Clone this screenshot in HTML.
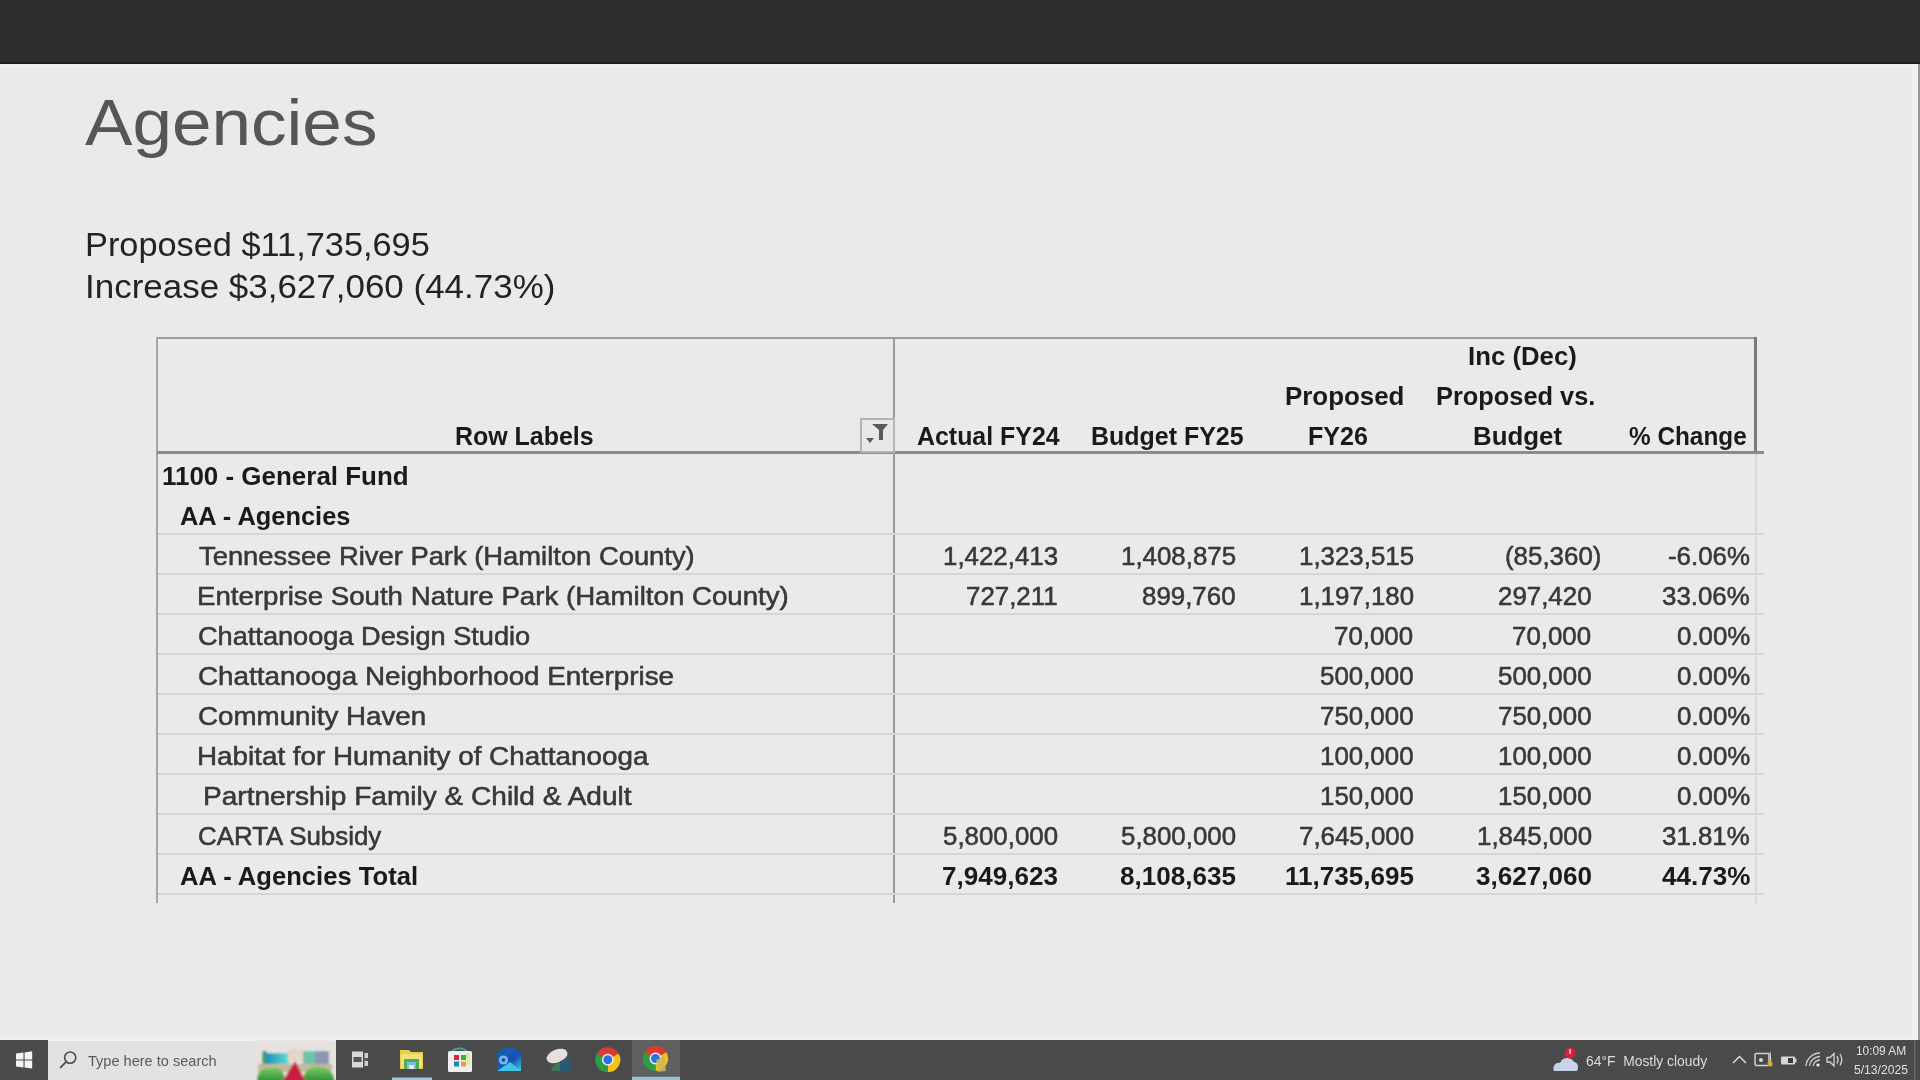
<!DOCTYPE html><html><head><meta charset="utf-8"><title>Agencies</title><style>

html,body{margin:0;padding:0;}
body{width:1920px;height:1080px;overflow:hidden;background:#eaeaea;position:relative;font-family:"Liberation Sans",sans-serif;}
.t{position:absolute;white-space:nowrap;line-height:1;transform-origin:0 0;}
.abs{position:absolute;}
.rg{-webkit-text-stroke:0.55px currentColor;}

</style></head><body>
<div id="slide" style="position:absolute;left:0;top:0;width:1920px;height:1080px;filter:blur(0.4px)">
<div class="abs" style="left:0;top:0;width:1920px;height:64px;background:#2d2d2d"></div><div class="abs" style="left:0;top:62px;width:1920px;height:2px;background:#1f1f1f"></div><div class="abs" style="left:0;top:65px;width:1920px;height:3px;background:#efefef"></div><div class="abs" style="left:1912px;top:64px;width:6px;height:976px;background:#f1f1f1"></div><div class="abs" style="left:1918px;top:64px;width:2px;height:976px;background:#9a9a9a"></div>
<div class="abs" style="left:157px;top:337px;width:1599px;height:2px;background:#9c9c9c"></div>
<div class="abs" style="left:156px;top:337px;width:2px;height:566px;background:#a6a6a6"></div>
<div class="abs" style="left:1754px;top:337px;width:3px;height:116px;background:#7a7a7a"></div>
<div class="abs" style="left:1755px;top:453px;width:2px;height:451px;background:#dadada"></div>
<div class="abs" style="left:157px;top:451px;width:1607px;height:3px;background:#8c8c8c"></div>
<div class="abs" style="left:893px;top:338px;width:2px;height:565px;background:#9a9a9a"></div>
<div class="abs" style="left:158px;top:533px;width:1606px;height:2px;background:#d6d6d6"></div>
<div class="abs" style="left:158px;top:573px;width:1606px;height:2px;background:#d6d6d6"></div>
<div class="abs" style="left:158px;top:613px;width:1606px;height:2px;background:#d6d6d6"></div>
<div class="abs" style="left:158px;top:653px;width:1606px;height:2px;background:#d6d6d6"></div>
<div class="abs" style="left:158px;top:693px;width:1606px;height:2px;background:#d6d6d6"></div>
<div class="abs" style="left:158px;top:733px;width:1606px;height:2px;background:#d6d6d6"></div>
<div class="abs" style="left:158px;top:773px;width:1606px;height:2px;background:#d6d6d6"></div>
<div class="abs" style="left:158px;top:813px;width:1606px;height:2px;background:#d6d6d6"></div>
<div class="abs" style="left:158px;top:853px;width:1606px;height:2px;background:#d6d6d6"></div>
<div class="abs" style="left:158px;top:893px;width:1606px;height:2px;background:#d6d6d6"></div>
<div class="abs" style="left:860px;top:418px;width:31px;height:31px;border:2px solid #b4b4b4;background:#e6e8ea"></div>
<svg class="abs" style="left:862px;top:420px" width="31" height="31" viewBox="0 0 31 31"><path d="M10 4 L26 4 L21 10 L21 20 L17 20 L17 10 Z" fill="#5a5a5a"/><path d="M4 18 L12 18 L8 23 Z" fill="#5a5a5a"/></svg>
<div class="t" id="title" style="left:85.00px;top:91.01px;font-size:64px;color:#565656;transform:scaleX(1.1107)">Agencies<span class="bl" style="display:inline-block;width:0;height:0"></span></div>
<div class="t" id="sub1" style="left:84.75px;top:227.01px;font-size:34px;color:#232323;transform:scaleX(1.0095)">Proposed $11,735,695<span class="bl" style="display:inline-block;width:0;height:0"></span></div>
<div class="t" id="sub2" style="left:84.57px;top:269.32px;font-size:34px;color:#232323;transform:scaleX(1.0283)">Increase $3,627,060 (44.73%)<span class="bl" style="display:inline-block;width:0;height:0"></span></div>
<div class="t" id="h_rl" style="left:454.95px;top:423.00px;font-size:26px;font-weight:bold;color:#1a1a1a;transform:scaleX(0.9596)">Row Labels<span class="bl" style="display:inline-block;width:0;height:0"></span></div>
<div class="t" id="h_a24" style="left:917.49px;top:423.00px;font-size:26px;font-weight:bold;color:#1a1a1a;transform:scaleX(0.9581)">Actual FY24<span class="bl" style="display:inline-block;width:0;height:0"></span></div>
<div class="t" id="h_b25" style="left:1091.29px;top:423.00px;font-size:26px;font-weight:bold;color:#1a1a1a;transform:scaleX(0.9601)">Budget FY25<span class="bl" style="display:inline-block;width:0;height:0"></span></div>
<div class="t" id="h_p26a" style="left:1284.65px;top:383.00px;font-size:26px;font-weight:bold;color:#1a1a1a;transform:scaleX(0.9960)">Proposed<span class="bl" style="display:inline-block;width:0;height:0"></span></div>
<div class="t" id="h_p26b" style="left:1308.36px;top:423.00px;font-size:26px;font-weight:bold;color:#1a1a1a;transform:scaleX(0.9644)">FY26<span class="bl" style="display:inline-block;width:0;height:0"></span></div>
<div class="t" id="h_inc1" style="left:1468.12px;top:343.00px;font-size:26px;font-weight:bold;color:#1a1a1a;transform:scaleX(0.9910)">Inc (Dec)<span class="bl" style="display:inline-block;width:0;height:0"></span></div>
<div class="t" id="h_inc2" style="left:1436.37px;top:383.00px;font-size:26px;font-weight:bold;color:#1a1a1a;transform:scaleX(0.9759)">Proposed vs.<span class="bl" style="display:inline-block;width:0;height:0"></span></div>
<div class="t" id="h_inc3" style="left:1472.64px;top:423.00px;font-size:26px;font-weight:bold;color:#1a1a1a;transform:scaleX(0.9940)">Budget<span class="bl" style="display:inline-block;width:0;height:0"></span></div>
<div class="t" id="h_pct" style="left:1628.79px;top:423.00px;font-size:26px;font-weight:bold;color:#1a1a1a;transform:scaleX(0.9364)">% Change<span class="bl" style="display:inline-block;width:0;height:0"></span></div>
<div class="t" id="r1" style="left:161.89px;top:463.00px;font-size:26px;font-weight:bold;color:#1a1a1a;transform:scaleX(0.9982)">1100 - General Fund<span class="bl" style="display:inline-block;width:0;height:0"></span></div>
<div class="t" id="r2" style="left:179.91px;top:503.00px;font-size:26px;font-weight:bold;color:#1a1a1a;transform:scaleX(0.9778)">AA - Agencies<span class="bl" style="display:inline-block;width:0;height:0"></span></div>
<div class="t rg" id="lab0" style="left:199.27px;top:543.00px;font-size:26px;color:#383838;transform:scaleX(1.0523)">Tennessee River Park (Hamilton County)<span class="bl" style="display:inline-block;width:0;height:0"></span></div>
<div class="t rg" id="lab1" style="left:197.27px;top:583.00px;font-size:26px;color:#383838;transform:scaleX(1.0637)">Enterprise South Nature Park (Hamilton County)<span class="bl" style="display:inline-block;width:0;height:0"></span></div>
<div class="t rg" id="lab2" style="left:197.84px;top:623.00px;font-size:26px;color:#383838;transform:scaleX(1.0446)">Chattanooga Design Studio<span class="bl" style="display:inline-block;width:0;height:0"></span></div>
<div class="t rg" id="lab3" style="left:197.81px;top:663.00px;font-size:26px;color:#383838;transform:scaleX(1.0692)">Chattanooga Neighborhood Enterprise<span class="bl" style="display:inline-block;width:0;height:0"></span></div>
<div class="t rg" id="lab4" style="left:197.81px;top:703.00px;font-size:26px;color:#383838;transform:scaleX(1.0668)">Community Haven<span class="bl" style="display:inline-block;width:0;height:0"></span></div>
<div class="t rg" id="lab5" style="left:196.62px;top:743.00px;font-size:26px;color:#383838;transform:scaleX(1.0695)">Habitat for Humanity of Chattanooga<span class="bl" style="display:inline-block;width:0;height:0"></span></div>
<div class="t rg" id="lab6" style="left:202.60px;top:783.00px;font-size:26px;color:#383838;transform:scaleX(1.0785)">Partnership Family &amp; Child &amp; Adult<span class="bl" style="display:inline-block;width:0;height:0"></span></div>
<div class="t rg" id="lab7" style="left:197.89px;top:823.00px;font-size:26px;color:#383838;transform:scaleX(0.9960)">CARTA Subsidy<span class="bl" style="display:inline-block;width:0;height:0"></span></div>
<div class="t" id="rtot" style="left:180.14px;top:863.00px;font-size:26px;font-weight:bold;color:#1a1a1a;transform:scaleX(0.9846)">AA - Agencies Total<span class="bl" style="display:inline-block;width:0;height:0"></span></div>
<div class="t rg" id="n0_0" style="left:942.63px;top:543.00px;font-size:26px;color:#383838;transform:scaleX(0.9953)">1,422,413<span class="bl" style="display:inline-block;width:0;height:0"></span></div>
<div class="t rg" id="n0_1" style="left:1120.63px;top:543.00px;font-size:26px;color:#383838;transform:scaleX(0.9953)">1,408,875<span class="bl" style="display:inline-block;width:0;height:0"></span></div>
<div class="t rg" id="n0_2" style="left:1298.63px;top:543.00px;font-size:26px;color:#383838;transform:scaleX(0.9953)">1,323,515<span class="bl" style="display:inline-block;width:0;height:0"></span></div>
<div class="t rg" id="n0_3" style="left:1504.78px;top:543.00px;font-size:26px;color:#383838;transform:scaleX(0.9953)">(85,360)<span class="bl" style="display:inline-block;width:0;height:0"></span></div>
<div class="t rg" id="n0_4" style="left:1668.23px;top:543.00px;font-size:26px;color:#383838;transform:scaleX(0.9953)">-6.06%<span class="bl" style="display:inline-block;width:0;height:0"></span></div>
<div class="t rg" id="n1_0" style="left:966.43px;top:583.00px;font-size:26px;color:#383838;transform:scaleX(0.9953)">727,211<span class="bl" style="display:inline-block;width:0;height:0"></span></div>
<div class="t rg" id="n1_1" style="left:1142.36px;top:583.00px;font-size:26px;color:#383838;transform:scaleX(0.9953)">899,760<span class="bl" style="display:inline-block;width:0;height:0"></span></div>
<div class="t rg" id="n1_2" style="left:1298.63px;top:583.00px;font-size:26px;color:#383838;transform:scaleX(0.9953)">1,197,180<span class="bl" style="display:inline-block;width:0;height:0"></span></div>
<div class="t rg" id="n1_3" style="left:1498.36px;top:583.00px;font-size:26px;color:#383838;transform:scaleX(0.9953)">297,420<span class="bl" style="display:inline-block;width:0;height:0"></span></div>
<div class="t rg" id="n1_4" style="left:1662.18px;top:583.00px;font-size:26px;color:#383838;transform:scaleX(0.9953)">33.06%<span class="bl" style="display:inline-block;width:0;height:0"></span></div>
<div class="t rg" id="n2_2" style="left:1334.34px;top:623.00px;font-size:26px;color:#383838;transform:scaleX(0.9953)">70,000<span class="bl" style="display:inline-block;width:0;height:0"></span></div>
<div class="t rg" id="n2_3" style="left:1512.34px;top:623.00px;font-size:26px;color:#383838;transform:scaleX(0.9953)">70,000<span class="bl" style="display:inline-block;width:0;height:0"></span></div>
<div class="t rg" id="n2_4" style="left:1677.10px;top:623.00px;font-size:26px;color:#383838;transform:scaleX(0.9953)">0.00%<span class="bl" style="display:inline-block;width:0;height:0"></span></div>
<div class="t rg" id="n3_2" style="left:1320.36px;top:663.00px;font-size:26px;color:#383838;transform:scaleX(0.9953)">500,000<span class="bl" style="display:inline-block;width:0;height:0"></span></div>
<div class="t rg" id="n3_3" style="left:1498.36px;top:663.00px;font-size:26px;color:#383838;transform:scaleX(0.9953)">500,000<span class="bl" style="display:inline-block;width:0;height:0"></span></div>
<div class="t rg" id="n3_4" style="left:1677.10px;top:663.00px;font-size:26px;color:#383838;transform:scaleX(0.9953)">0.00%<span class="bl" style="display:inline-block;width:0;height:0"></span></div>
<div class="t rg" id="n4_2" style="left:1320.36px;top:703.00px;font-size:26px;color:#383838;transform:scaleX(0.9953)">750,000<span class="bl" style="display:inline-block;width:0;height:0"></span></div>
<div class="t rg" id="n4_3" style="left:1498.36px;top:703.00px;font-size:26px;color:#383838;transform:scaleX(0.9953)">750,000<span class="bl" style="display:inline-block;width:0;height:0"></span></div>
<div class="t rg" id="n4_4" style="left:1677.10px;top:703.00px;font-size:26px;color:#383838;transform:scaleX(0.9953)">0.00%<span class="bl" style="display:inline-block;width:0;height:0"></span></div>
<div class="t rg" id="n5_2" style="left:1320.36px;top:743.00px;font-size:26px;color:#383838;transform:scaleX(0.9953)">100,000<span class="bl" style="display:inline-block;width:0;height:0"></span></div>
<div class="t rg" id="n5_3" style="left:1498.36px;top:743.00px;font-size:26px;color:#383838;transform:scaleX(0.9953)">100,000<span class="bl" style="display:inline-block;width:0;height:0"></span></div>
<div class="t rg" id="n5_4" style="left:1677.10px;top:743.00px;font-size:26px;color:#383838;transform:scaleX(0.9953)">0.00%<span class="bl" style="display:inline-block;width:0;height:0"></span></div>
<div class="t rg" id="n6_2" style="left:1320.36px;top:783.00px;font-size:26px;color:#383838;transform:scaleX(0.9953)">150,000<span class="bl" style="display:inline-block;width:0;height:0"></span></div>
<div class="t rg" id="n6_3" style="left:1498.36px;top:783.00px;font-size:26px;color:#383838;transform:scaleX(0.9953)">150,000<span class="bl" style="display:inline-block;width:0;height:0"></span></div>
<div class="t rg" id="n6_4" style="left:1677.10px;top:783.00px;font-size:26px;color:#383838;transform:scaleX(0.9953)">0.00%<span class="bl" style="display:inline-block;width:0;height:0"></span></div>
<div class="t rg" id="n7_0" style="left:942.63px;top:823.00px;font-size:26px;color:#383838;transform:scaleX(0.9953)">5,800,000<span class="bl" style="display:inline-block;width:0;height:0"></span></div>
<div class="t rg" id="n7_1" style="left:1120.63px;top:823.00px;font-size:26px;color:#383838;transform:scaleX(0.9953)">5,800,000<span class="bl" style="display:inline-block;width:0;height:0"></span></div>
<div class="t rg" id="n7_2" style="left:1298.63px;top:823.00px;font-size:26px;color:#383838;transform:scaleX(0.9953)">7,645,000<span class="bl" style="display:inline-block;width:0;height:0"></span></div>
<div class="t rg" id="n7_3" style="left:1476.63px;top:823.00px;font-size:26px;color:#383838;transform:scaleX(0.9953)">1,845,000<span class="bl" style="display:inline-block;width:0;height:0"></span></div>
<div class="t rg" id="n7_4" style="left:1662.18px;top:823.00px;font-size:26px;color:#383838;transform:scaleX(0.9953)">31.81%<span class="bl" style="display:inline-block;width:0;height:0"></span></div>
<div class="t" id="n8_0" style="left:941.83px;top:863.00px;font-size:26px;font-weight:bold;color:#1a1a1a;transform:scaleX(1.0022)">7,949,623<span class="bl" style="display:inline-block;width:0;height:0"></span></div>
<div class="t" id="n8_1" style="left:1119.79px;top:863.00px;font-size:26px;font-weight:bold;color:#1a1a1a;transform:scaleX(1.0022)">8,108,635<span class="bl" style="display:inline-block;width:0;height:0"></span></div>
<div class="t" id="n8_2" style="left:1284.80px;top:863.00px;font-size:26px;font-weight:bold;color:#1a1a1a;transform:scaleX(1.0022)">11,735,695<span class="bl" style="display:inline-block;width:0;height:0"></span></div>
<div class="t" id="n8_3" style="left:1475.81px;top:863.00px;font-size:26px;font-weight:bold;color:#1a1a1a;transform:scaleX(1.0022)">3,627,060<span class="bl" style="display:inline-block;width:0;height:0"></span></div>
<div class="t" id="n8_4" style="left:1661.53px;top:863.00px;font-size:26px;font-weight:bold;color:#1a1a1a;transform:scaleX(1.0022)">44.73%<span class="bl" style="display:inline-block;width:0;height:0"></span></div>
</div>
<div class="abs" style="left:0;top:1036px;width:1912px;height:4px;background:#eeeeee"></div>
<div class="abs" style="left:0;top:1040px;width:1920px;height:40px;background:#4a4a4a"></div>
<div class="abs" style="left:48px;top:1040px;width:288px;height:40px;background:#e2e2e2;box-shadow:inset 0 1px 0 #f2f2f2"></div>
<div class="t" style="left:88px;top:1053px;font-size:15px;color:#5a5a5a;transform:scaleX(0.97)">Type here to search</div>
<svg class="abs" style="left:0;top:1040px" width="1920" height="40" viewBox="0 1040 1920 40"><g fill="#f4f4f4"><path d="M16 1053.6 L23.5 1052.6 L23.5 1059.4 L16 1059.4 Z"/><path d="M24.6 1052.4 L32.2 1051.3 L32.2 1059.4 L24.6 1059.4 Z"/><path d="M16 1060.5 L23.5 1060.5 L23.5 1067.4 L16 1066.4 Z"/><path d="M24.6 1060.5 L32.2 1060.5 L32.2 1068.6 L24.6 1067.6 Z"/></g><circle cx="70.2" cy="1057.6" r="5.6" fill="none" stroke="#4e4e4e" stroke-width="1.6"/><path d="M66.2 1061.8 L60.6 1067.4" stroke="#4e4e4e" stroke-width="1.8" stroke-linecap="round"/><defs><filter id="bl1" x="-10%" y="-10%" width="120%" height="120%"><feGaussianBlur stdDeviation="0.9"/></filter><filter id="bl2" x="-20%" y="-20%" width="140%" height="140%"><feGaussianBlur stdDeviation="0.45"/></filter></defs><g filter="url(#bl1)"><rect x="256" y="1040" width="78" height="44" fill="#e6e2e0"/><defs><linearGradient id="tg" x1="0" x2="1" y1="0" y2="0"><stop offset="0" stop-color="#1f8fb8"/><stop offset="1" stop-color="#5ee0d6"/></linearGradient><linearGradient id="gg" x1="0" x2="0" y1="0" y2="1"><stop offset="0" stop-color="#7cc86a"/><stop offset="1" stop-color="#1f8a2a"/></linearGradient></defs><rect x="262" y="1051" width="5" height="13" fill="#4aa070"/><rect x="266" y="1053" width="23" height="12" fill="url(#tg)"/><rect x="288" y="1049" width="15" height="12" fill="#e6d6c6"/><rect x="303" y="1051" width="13" height="13" fill="#6cc4a8"/><rect x="315" y="1051" width="14" height="13" fill="#8c98b0"/><rect x="258" y="1064" width="74" height="8" fill="#c6b89a"/><path d="M257 1084 L257 1080 C257 1070 266 1066 272 1068 C280 1066 285 1073 285 1080 L285 1084 Z" fill="url(#gg)"/><path d="M303 1084 L303 1080 C303 1071 312 1065 320 1067 C330 1068 334 1074 334 1080 L334 1084 Z" fill="url(#gg)"/><path d="M295 1061 L307 1084 L281 1084 Z" fill="#c81e40"/></g><g filter="url(#bl2)"><rect x="352" y="1051.5" width="11" height="16" fill="#d8d8d8"/><rect x="353.5" y="1057" width="8" height="5" fill="#555"/><rect x="364.5" y="1053" width="3.5" height="13" fill="#cfcfcf"/><rect x="364.5" y="1058" width="3.5" height="3" fill="#555"/><path d="M400 1050 L409 1050 L411 1052 L423 1052 L423 1069 L400 1069 Z" fill="#e9cf4a"/><rect x="401" y="1054" width="21" height="14" fill="#f2e07a"/><rect x="404" y="1059" width="15" height="10" fill="#4cae58"/><rect x="407" y="1062" width="9" height="7" fill="#7fb8e0"/><rect x="409" y="1065" width="5" height="4" fill="#f0e8d0"/><rect x="392" y="1077.5" width="40" height="2.5" fill="#a2c6dc"/><path d="M452 1053 C452 1047 467 1047 467 1053" fill="none" stroke="#4a9a98" stroke-width="2"/><rect x="448" y="1051" width="24" height="21" rx="1.5" fill="#eeeeee"/><rect x="454" y="1055" width="5" height="5" fill="#d02a3c"/><rect x="461" y="1055" width="5" height="5" fill="#4aa83a"/><rect x="454" y="1061.5" width="5" height="5" fill="#1e8ab0"/><rect x="461" y="1061.5" width="5" height="5" fill="#e6a040"/><rect x="466" y="1053" width="4" height="12" fill="#dfe88a" opacity="0.8"/><defs><linearGradient id="og" x1="0" x2="1" y1="0" y2="1"><stop offset="0" stop-color="#0b6ab8"/><stop offset="0.6" stop-color="#1a4fb0"/><stop offset="1" stop-color="#40d0e0"/></linearGradient></defs><path d="M497 1054 C503 1046 515 1046 521 1053 L521 1071 L497 1071 Z" fill="url(#og)"/><path d="M497 1071 L510 1062 L521 1071 Z" fill="#3cc6e0"/><circle cx="503.5" cy="1060" r="4.6" fill="#7ab8f0"/><circle cx="503.5" cy="1060" r="2" fill="#1a58a8"/><ellipse cx="557" cy="1056" rx="11" ry="6.5" transform="rotate(-22 557 1056)" fill="#e8dede"/><path d="M556 1071 C556 1063 562 1058 571 1058 L572 1071 Z" fill="#2c5a70"/><path d="M551 1071 C552 1066 556 1063 560 1063 L560 1071 Z" fill="#3a7a5a"/><path d="M607.80 1059.70 L596.97 1053.45 A12.50 12.50 0 0 1 618.63 1053.45 Z" fill="#db3a30"/><path d="M607.80 1059.70 L618.63 1053.45 A12.50 12.50 0 0 1 607.80 1072.20 Z" fill="#f2c418"/><path d="M607.80 1059.70 L607.80 1072.20 A12.50 12.50 0 0 1 596.97 1053.45 Z" fill="#2f9e44"/><circle cx="607.80" cy="1059.70" r="5.88" fill="#f4f4f4"/><circle cx="607.80" cy="1059.70" r="4.50" fill="#2f6fe0"/><rect x="632" y="1040" width="48" height="40" fill="#606060"/><path d="M655.50 1058.50 L644.67 1052.25 A12.50 12.50 0 0 1 666.33 1052.25 Z" fill="#db3a30"/><path d="M655.50 1058.50 L666.33 1052.25 A12.50 12.50 0 0 1 655.50 1071.00 Z" fill="#f2c418"/><path d="M655.50 1058.50 L655.50 1071.00 A12.50 12.50 0 0 1 644.67 1052.25 Z" fill="#2f9e44"/><circle cx="655.50" cy="1058.50" r="5.88" fill="#f4f4f4"/><circle cx="655.50" cy="1058.50" r="4.50" fill="#2f6fe0"/><path d="M656 1060 L664 1056 L666 1071 L658 1072 Z" fill="#c8b860" opacity="0.85"/><rect x="632" y="1076.8" width="48" height="3.2" fill="#9cc0d6"/><path d="M1554 1071 C1552 1066 1556 1062 1560 1063 C1562 1057 1571 1056 1574 1062 C1578 1062 1579 1068 1577 1071 Z" fill="#c8d4e6"/><circle cx="1570" cy="1053" r="5.5" fill="#d0203a"/><rect x="1569.2" y="1049" width="1.8" height="5" fill="#f2b0b8"/><path d="M1733 1063 L1739.5 1056.5 L1746 1063" fill="none" stroke="#d8d8d8" stroke-width="1.5"/><rect x="1755" y="1053.5" width="14" height="12" rx="1" fill="none" stroke="#d0d0d0" stroke-width="1.5"/><path d="M1770 1052 L1771 1064" stroke="#d0d0d0" stroke-width="1.2"/><circle cx="1761" cy="1060" r="2" fill="#d8d8d8"/><circle cx="1770" cy="1064" r="2.6" fill="#d0b020"/><rect x="1781" y="1056.5" width="14" height="8" rx="1" fill="#d6d6d6"/><rect x="1788" y="1058" width="5" height="5" fill="#3a3a3a"/><rect x="1795" y="1058.5" width="1.5" height="4" fill="#d6d6d6"/><g fill="none" stroke="#cfcfcf" stroke-width="1.3"><path d="M1806 1066 A14 14 0 0 1 1820 1053"/><path d="M1809.5 1066 A10.5 10.5 0 0 1 1820 1056.5"/><path d="M1813 1066 A7 7 0 0 1 1820 1060"/></g><circle cx="1818" cy="1065" r="1.6" fill="#eee"/><path d="M1827 1057.5 L1830 1057.5 L1834 1053.5 L1834 1066 L1830 1062 L1827 1062 Z" fill="none" stroke="#d4d4d4" stroke-width="1.3"/><path d="M1837 1056 Q1839 1059.7 1837 1063.5 M1840 1054 Q1843.5 1059.7 1840 1065.5" fill="none" stroke="#d4d4d4" stroke-width="1.3"/></g><rect x="1914" y="1040" width="1.5" height="40" fill="#6a6a6a"/></svg>
<div class="t" style="left:1586px;top:1054px;font-size:14px;color:#dcdcdc;transform:scaleX(0.99)">64°F&nbsp; Mostly cloudy</div>
<div class="t" style="left:1856px;top:1045px;font-size:12.5px;color:#e0e0e0;transform:scaleX(0.95)">10:09 AM</div>
<div class="t" style="left:1854px;top:1063.8px;font-size:12.5px;color:#e0e0e0;transform:scaleX(0.97)">5/13/2025</div>

</body></html>
